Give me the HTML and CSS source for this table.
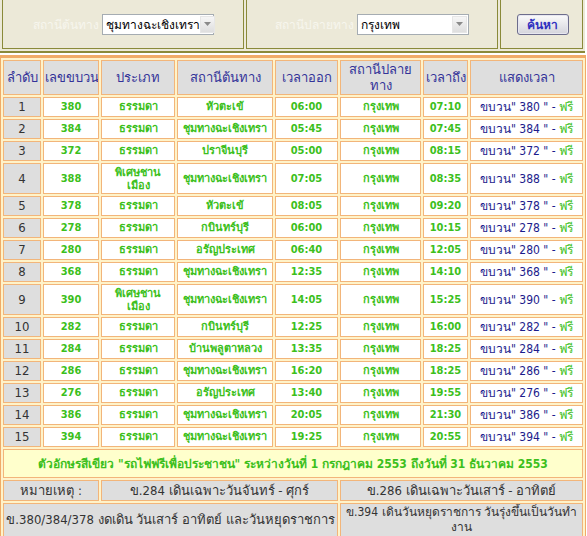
FILE: index.html
```html
<!DOCTYPE html>
<html lang="th">
<head>
<meta charset="utf-8">
<title>ตารางเดินรถไฟ</title>
<link rel="stylesheet" href="styles.css">
</head>
<body>
<table class="search">
  <tr>
    <td class="search-cell w1">
      <div class="field">
        <span class="label">สถานีต้นทาง</span>
        <div class="select s1"><span class="val">ชุมทางฉะเชิงเทรา</span><span class="arrow"><svg width="7" height="4" viewBox="0 0 7 4"><path d="M0 0h7L3.5 4z" fill="#8a8a8a"/></svg></span></div>
      </div>
    </td>
    <td class="search-cell w2">
      <div class="field">
        <span class="label">สถานีปลายทาง</span>
        <div class="select s2"><span class="val">กรุงเทพ</span><span class="arrow"><svg width="7" height="4" viewBox="0 0 7 4"><path d="M0 0h7L3.5 4z" fill="#8a8a8a"/></svg></span></div>
      </div>
    </td>
    <td class="search-cell w3">
      <button class="btn" type="button">ค้นหา</button>
    </td>
  </tr>
</table>

<table class="sched">
  <colgroup>
    <col class="c1"><col class="c2"><col class="c3"><col class="c4"><col class="c5"><col class="c6"><col class="c7"><col class="c8">
  </colgroup>
  <tr class="head">
    <th>ลำดับ</th><th>เลขขบวน</th><th>ประเภท</th><th>สถานีต้นทาง</th><th>เวลาออก</th><th>สถานีปลาย<br>ทาง</th><th>เวลาถึง</th><th>แสดงเวลา</th>
  </tr>
  <tr><td class="no">1</td><td class="num">380</td><td class="type">ธรรมดา</td><td class="stn">หัวตะเข้</td><td class="time">06:00</td><td class="dest">กรุงเทพ</td><td class="time">07:10</td><td class="show">ขบวน" 380 " - <span class="free">ฟรี</span></td></tr>
  <tr><td class="no">2</td><td class="num">384</td><td class="type">ธรรมดา</td><td class="stn">ชุมทางฉะเชิงเทรา</td><td class="time">05:45</td><td class="dest">กรุงเทพ</td><td class="time">07:45</td><td class="show">ขบวน" 384 " - <span class="free">ฟรี</span></td></tr>
  <tr><td class="no">3</td><td class="num">372</td><td class="type">ธรรมดา</td><td class="stn">ปราจีนบุรี</td><td class="time">05:00</td><td class="dest">กรุงเทพ</td><td class="time">08:15</td><td class="show">ขบวน" 372 " - <span class="free">ฟรี</span></td></tr>
  <tr class="tall"><td class="no">4</td><td class="num">388</td><td class="type">พิเศษชาน<br>เมือง</td><td class="stn">ชุมทางฉะเชิงเทรา</td><td class="time">07:05</td><td class="dest">กรุงเทพ</td><td class="time">08:35</td><td class="show">ขบวน" 388 " - <span class="free">ฟรี</span></td></tr>
  <tr><td class="no">5</td><td class="num">378</td><td class="type">ธรรมดา</td><td class="stn">หัวตะเข้</td><td class="time">08:05</td><td class="dest">กรุงเทพ</td><td class="time">09:20</td><td class="show">ขบวน" 378 " - <span class="free">ฟรี</span></td></tr>
  <tr><td class="no">6</td><td class="num">278</td><td class="type">ธรรมดา</td><td class="stn">กบินทร์บุรี</td><td class="time">06:00</td><td class="dest">กรุงเทพ</td><td class="time">10:15</td><td class="show">ขบวน" 278 " - <span class="free">ฟรี</span></td></tr>
  <tr><td class="no">7</td><td class="num">280</td><td class="type">ธรรมดา</td><td class="stn">อรัญประเทศ</td><td class="time">06:40</td><td class="dest">กรุงเทพ</td><td class="time">12:05</td><td class="show">ขบวน" 280 " - <span class="free">ฟรี</span></td></tr>
  <tr><td class="no">8</td><td class="num">368</td><td class="type">ธรรมดา</td><td class="stn">ชุมทางฉะเชิงเทรา</td><td class="time">12:35</td><td class="dest">กรุงเทพ</td><td class="time">14:10</td><td class="show">ขบวน" 368 " - <span class="free">ฟรี</span></td></tr>
  <tr class="tall"><td class="no">9</td><td class="num">390</td><td class="type">พิเศษชาน<br>เมือง</td><td class="stn">ชุมทางฉะเชิงเทรา</td><td class="time">14:05</td><td class="dest">กรุงเทพ</td><td class="time">15:25</td><td class="show">ขบวน" 390 " - <span class="free">ฟรี</span></td></tr>
  <tr><td class="no">10</td><td class="num">282</td><td class="type">ธรรมดา</td><td class="stn">กบินทร์บุรี</td><td class="time">12:25</td><td class="dest">กรุงเทพ</td><td class="time">16:00</td><td class="show">ขบวน" 282 " - <span class="free">ฟรี</span></td></tr>
  <tr><td class="no">11</td><td class="num">284</td><td class="type">ธรรมดา</td><td class="stn">บ้านพลูตาหลวง</td><td class="time">13:35</td><td class="dest">กรุงเทพ</td><td class="time">18:25</td><td class="show">ขบวน" 284 " - <span class="free">ฟรี</span></td></tr>
  <tr><td class="no">12</td><td class="num">286</td><td class="type">ธรรมดา</td><td class="stn">ชุมทางฉะเชิงเทรา</td><td class="time">16:20</td><td class="dest">กรุงเทพ</td><td class="time">18:25</td><td class="show">ขบวน" 286 " - <span class="free">ฟรี</span></td></tr>
  <tr><td class="no">13</td><td class="num">276</td><td class="type">ธรรมดา</td><td class="stn">อรัญประเทศ</td><td class="time">13:40</td><td class="dest">กรุงเทพ</td><td class="time">19:55</td><td class="show">ขบวน" 276 " - <span class="free">ฟรี</span></td></tr>
  <tr><td class="no">14</td><td class="num">386</td><td class="type">ธรรมดา</td><td class="stn">ชุมทางฉะเชิงเทรา</td><td class="time">20:05</td><td class="dest">กรุงเทพ</td><td class="time">21:30</td><td class="show">ขบวน" 386 " - <span class="free">ฟรี</span></td></tr>
  <tr><td class="no">15</td><td class="num">394</td><td class="type">ธรรมดา</td><td class="stn">ชุมทางฉะเชิงเทรา</td><td class="time">19:25</td><td class="dest">กรุงเทพ</td><td class="time">20:55</td><td class="show">ขบวน" 394 " - <span class="free">ฟรี</span></td></tr>
  <tr class="notice-row"><td colspan="8" class="notice">ตัวอักษรสีเขียว "รถไฟฟรีเพื่อประชาชน" ระหว่างวันที่ 1 กรกฎาคม 2553 ถึงวันที่ 31 ธันวาคม 2553</td></tr>
  <tr class="remark-row"><td colspan="2" class="remark">หมายเหตุ :</td><td colspan="3" class="remark">ข.284 เดินเฉพาะวันจันทร์ - ศุกร์</td><td colspan="3" class="remark">ข.286 เดินเฉพาะวันเสาร์ - อาทิตย์</td></tr>
  <tr class="remark-row2"><td colspan="5" class="remark nowrap">ข.380/384/378 งดเดิน วันเสาร์ อาทิตย์ และวันหยุดราชการ</td><td colspan="3" class="remark small">ข.394 เดินวันหยุดราชการ วันรุ่งขึ้นเป็นวันทำ<br>งาน</td></tr>
</table>
</body>
</html>
```
FILE: styles.css
```css
html, body {
  margin: 0;
  padding: 0;
  background: #ffffff;
}
body {
  font-family: Tahoma, "DejaVu Sans Condensed", "DejaVu Sans", sans-serif;
  font-size: 13px;
  color: #333333;
}

/* search bar */
.search {
  width: 585px;
  margin-top: -3px;
  border-collapse: separate;
  border-spacing: 2px;
  background: #ece9d8;
  border-bottom: 2px solid #8a8a3a;
}
.search-cell {
  border: 1px solid #8a8a3a;
  height: 48px;
  padding: 0;
  text-align: center;
  vertical-align: middle;
}
.w1 { width: 240px; }
.w2 { width: 250px; }
.w3 { width: 81px; }
.field {
  display: flex;
  justify-content: center;
  align-items: center;
  gap: 3px;
}
.label {
  color: #f7f6ee;
  font-size: 12px;
  white-space: nowrap;
}
.select {
  display: flex;
  align-items: center;
  justify-content: space-between;
  height: 21px;
  box-sizing: border-box;
  border: 1px solid #a5acb2;
  background: #ffffff;
  padding: 0 1px 0 3px;
  color: #000;
  font-size: 12px;
  white-space: nowrap;
}
.s1 { width: 112px; }
.s2 { width: 112px; }
.arrow {
  display: flex;
  align-items: center;
  justify-content: center;
  width: 15px;
  height: 17px;
  background: linear-gradient(#f6f6f6, #dedede);
  border: 1px solid #e6e6e6;
  box-sizing: border-box;
  flex: none;
}
.btn {
  width: 52px;
  height: 21px;
  border: 1px solid #6d6d8c;
  border-radius: 3px;
  background: linear-gradient(#fbfbfb, #d4d4dc);
  box-shadow: inset 0 0 0 1px #e7e7f0;
  color: #3030c0;
  font-family: inherit;
  font-weight: bold;
  font-size: 12px;
  padding: 0;
  margin-left: 2px;
}

/* schedule table */
.sched {
  width: 586px;
  margin-top: 2px;
  table-layout: fixed;
  border-collapse: separate;
  border-spacing: 2px;
  background: #fff3c9;
  border: 1px solid #f0ab68;
  border-top-width: 3px;
}
.c1 { width: 38px; }
.c2 { width: 56px; }
.c3 { width: 74px; }
.c4 { width: 96px; }
.c5 { width: 63px; }
.c6 { width: 81px; }
.c7 { width: 45px; }
.c8 { width: 113px; }

.sched th, .sched td {
  border: 1px solid #f2b57a;
  padding: 0 1px;
  text-align: center;
  vertical-align: middle;
  white-space: nowrap;
  overflow: hidden;
}
.sched th {
  background: #dedede;
  color: #333399;
  font-weight: normal;
  font-size: 13px;
  line-height: 16px;
  height: 33px;
}
.sched td {
  background: #ffffff;
  height: 18px;
  line-height: 16px;
}
.sched tr.tall td { height: 29px; }
.sched td.no {
  background: #dedede;
  color: #333333;
  font-size: 13px;
}
.num, .time {
  color: #3cbf1c;
  font-weight: bold;
  font-size: 11px;
}
.type, .stn, .dest {
  color: #3cbf1c;
  font-weight: bold;
  font-size: 11px;
}
.tall .type { line-height: 13px; }
.show {
  color: #1c1c8c;
  font-size: 12px;
}
.free { color: #3cbf1c; }

.sched td.notice {
  background: #ffffcc;
  color: #3cbf1c;
  font-weight: bold;
  font-size: 12px;
  height: 27px;
}
.sched td.remark {
  background: #dedede;
  color: #333333;
  font-size: 13px;
  white-space: normal;
}
.sched td.remark.nowrap { white-space: nowrap; }
.sched td.remark.small { font-size: 12px; line-height: 15px; }
.remark-row td { height: 19px; }
.remark-row2 td { height: 32px; }
```
